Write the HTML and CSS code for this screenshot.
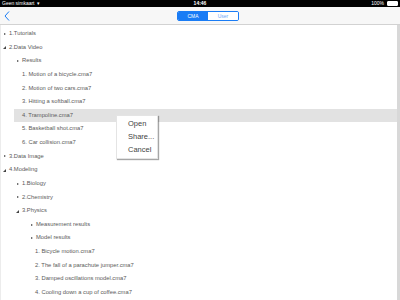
FILE: index.html
```html
<!DOCTYPE html>
<html lang="en">
<head>
    <meta charset="UTF-8">
    <title>CMA Files</title>
    <link rel="stylesheet" href="styles.css">
</head>
<body>
    <div class="status">
        <span class="carrier">Geen simkaart <span class="wifi">&#9662;</span></span>
        <span class="clock">14:46</span>
        <span class="power">100% <span class="battery"></span></span>
    </div>

    <header class="navbar">
        <svg class="back" width="6" height="10" viewBox="0 0 6 10">
            <path d="M5 0.5 L1 5 L5 9.5" fill="none" stroke="#1a7cf5" stroke-width="1"/>
        </svg>
        <div class="segment">
            <span class="seg active">CMA</span>
            <span class="seg">User</span>
        </div>
    </header>

    <main class="tree">
        <div class="row lvl0"><span class="tri closed"></span>1.Tutorials</div>
        <div class="row lvl0"><span class="tri open"></span>2.Data Video</div>
        <div class="row lvl1"><span class="tri closed"></span>Results</div>
        <div class="row file f1">1. Motion of a bicycle.cma7</div>
        <div class="row file f1">2. Motion of two cars.cma7</div>
        <div class="row file f1">3. Hitting a softball.cma7</div>
        <div class="row file f1 selected">4. Trampoline.cma7</div>
        <div class="row file f1">5. Basketball shot.cma7</div>
        <div class="row file f1">6. Car collision.cma7</div>
        <div class="row lvl0"><span class="tri closed"></span>3.Data Image</div>
        <div class="row lvl0"><span class="tri open"></span>4.Modeling</div>
        <div class="row lvl1"><span class="tri closed"></span>1.Biology</div>
        <div class="row lvl1"><span class="tri closed"></span>2.Chemistry</div>
        <div class="row lvl1"><span class="tri open"></span>3.Physics</div>
        <div class="row lvl2"><span class="tri closed"></span>Measurement results</div>
        <div class="row lvl2"><span class="tri closed"></span>Model results</div>
        <div class="row file f2">1. Bicycle motion.cma7</div>
        <div class="row file f2">2. The fall of a parachute jumper.cma7</div>
        <div class="row file f2">3. Damped oscillations model.cma7</div>
        <div class="row file f2">4. Cooling down a cup of coffee.cma7</div>
    </main>

    <div class="menu">
        <div class="menu-item">Open</div>
        <div class="menu-item">Share...</div>
        <div class="menu-item">Cancel</div>
    </div>
</body>
</html>
```

FILE: styles.css
```css
html, body {
    margin: 0;
    padding: 0;
}
body {
    width: 400px;
    height: 300px;
    overflow: hidden;
    background: #ffffff;
    font-family: "Liberation Sans", Arial, sans-serif;
    position: relative;
}
.status {
    height: 7px;
    background: #000;
    color: #fff;
    font-size: 5px;
    line-height: 7px;
    display: flex;
    justify-content: space-between;
    align-items: center;
    padding: 0 2px;
}
.carrier, .power {
    flex: 1;
    display: flex;
    align-items: center;
    gap: 2px;
}
.power {
    justify-content: flex-end;
}
.wifi {
    font-size: 5px;
}
.clock {
    font-weight: bold;
}
.battery {
    display: inline-block;
    width: 9px;
    height: 3px;
    background: #fff;
    border: 0.5px solid #fff;
    border-radius: 1px;
    margin-left: 1px;
}
.navbar {
    height: 17px;
    background: #f7f7f7;
    border-bottom: 1px solid #d2d2d2;
    display: flex;
    align-items: center;
    justify-content: center;
    position: relative;
}
.back {
    position: absolute;
    left: 4px;
    top: 4px;
}
.segment {
    display: flex;
    border: 1px solid #1a7cf5;
    border-radius: 2px;
    overflow: hidden;
    height: 8px;
    margin-left: 16px;
}
.seg {
    width: 30px;
    font-size: 5px;
    line-height: 8px;
    text-align: center;
    color: #6ea8f7;
    background: #fff;
}
.seg.active {
    background: #1a7cf5;
    color: #fff;
}
.tree {
    padding-top: 2px;
    border-right: 3px solid #d8d8d8;
    border-left: 1px solid #ececec;
    height: 280px;
}
.row {
    height: 13.63px;
    line-height: 13.63px;
    font-size: 5.8px;
    color: #5a5a5a;
    display: flex;
    align-items: center;
    white-space: nowrap;
}
.lvl0 { padding-left: 2px; }
.lvl1 { padding-left: 15px; }
.lvl2 { padding-left: 29px; }
.file { margin-left: 13px; }
.f1 { padding-left: 8px; }
.f2 { margin-left: 26px; padding-left: 8px; }
.selected {
    background: #e2e2e2;
}
.tri {
    width: 0;
    height: 0;
    margin-right: 3px;
}
.tri.closed {
    border-top: 1.5px solid transparent;
    border-bottom: 1.5px solid transparent;
    border-left: 2.5px solid #444;
    margin-left: 1px;
}
.tri.open {
    border-left: 3px solid transparent;
    border-bottom: 3px solid #444;
    margin-right: 3px;
    margin-top: 1px;
}
.menu {
    position: absolute;
    left: 116px;
    top: 115px;
    width: 40px;
    padding: 1px 0 2px;
    background: #fff;
    border: 1px solid #e4e4e4;
    box-shadow: 1px 1px 1px rgba(0,0,0,0.35);
}
.menu-item {
    font-size: 7.5px;
    line-height: 13px;
    padding-left: 11px;
    color: #444;
}
```
